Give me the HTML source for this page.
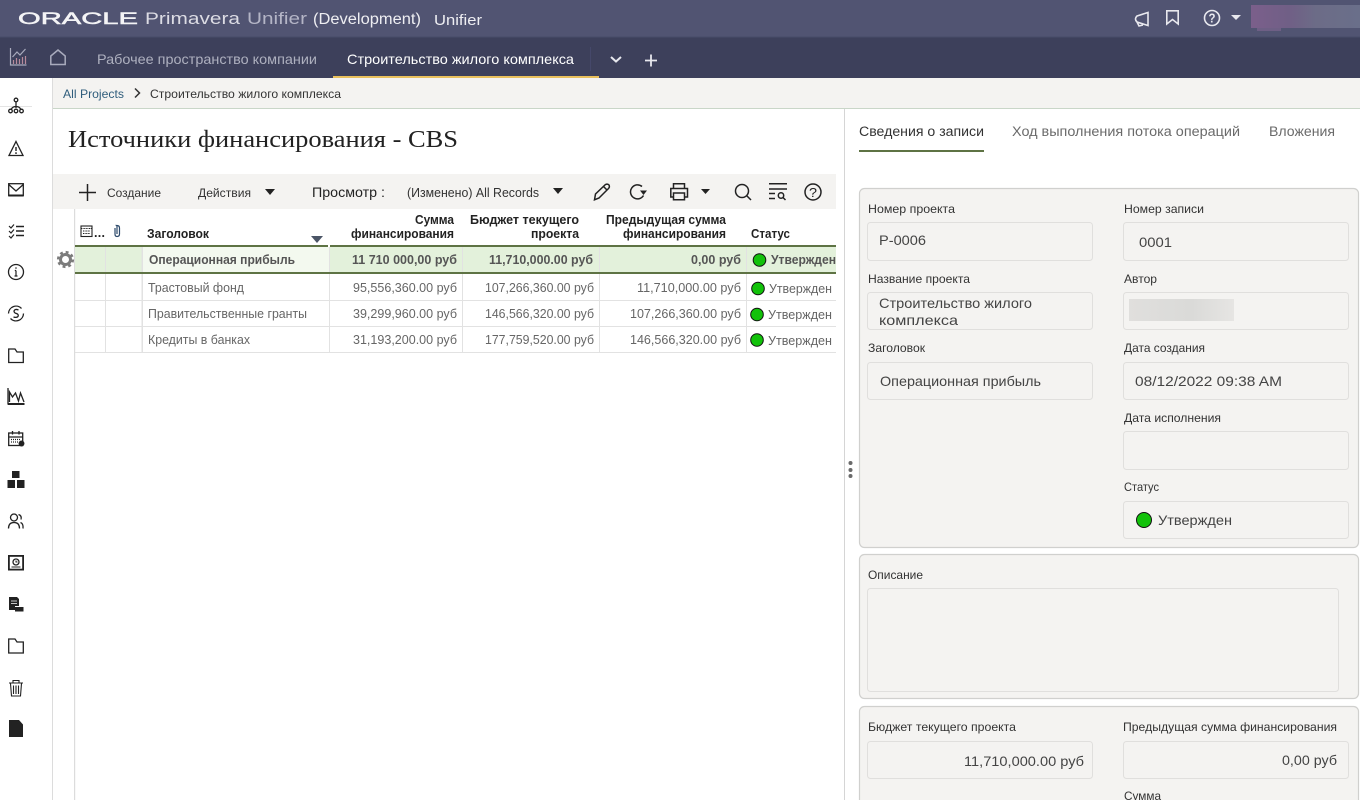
<!DOCTYPE html>
<html lang="ru"><head><meta charset="utf-8"><title>Unifier</title>
<style>
html,body{margin:0;padding:0;background:#fff;overflow:hidden;width:1360px;height:800px}
svg{position:absolute;left:0;top:0;display:block}
text{font-family:"Liberation Sans","Noto Sans CJK SC",sans-serif;font-size:13px;fill:#444;white-space:pre}
.h{font-weight:bold;font-size:12.5px;fill:#222}
.b{font-weight:bold;font-size:12.5px;fill:#555}
.c{font-size:12.5px;fill:#666}
.l{font-size:12px;fill:#333}
.v{font-size:14px;fill:#444}
.f{fill:#f4f3f1;stroke:#e0dfdd;stroke-width:1}
.p{fill:#f4f3f1;stroke:#d0d0ce;stroke-width:1.2}
.i{fill:none;stroke:#222;stroke-width:1.3}
.k{fill:#222;stroke:none}
.t{fill:none;stroke:#222;stroke-width:1.5}
.w{fill:none;stroke:#e8e8ee;stroke-width:1.6}
</style></head><body>
<svg width="1360" height="800" viewBox="0 0 1360 800" xmlns="http://www.w3.org/2000/svg">
<!-- top bars -->
<rect width="1360" height="37" fill="#515472"/>
<rect y="37" width="1360" height="41" fill="#3d405b"/>
<rect y="36.500" width="1360" height="1" fill="#484b68"/>
<text x="18" y="24" textLength="120" lengthAdjust="spacingAndGlyphs" style="font-size:17px;fill:#f4f4f6;stroke:#f4f4f6;stroke-width:.5">ORACLE</text>
<text x="145" y="24" textLength="95" lengthAdjust="spacingAndGlyphs" style="font-size:17px;fill:#dcdce4">Primavera</text>
<text x="247" y="24" textLength="60" lengthAdjust="spacingAndGlyphs" style="font-size:17px;fill:#b4b5c6">Unifier</text>
<text x="313" y="24" textLength="108" lengthAdjust="spacingAndGlyphs" style="font-size:15.500px;fill:#eeeef2">(Development)</text>
<text x="434" y="25" textLength="48" lengthAdjust="spacingAndGlyphs" style="font-size:15px;fill:#eeeef2">Unifier</text>
<!-- top right -->
<path class="w" d="M1137 16 L1148 12.500 V25.500 L1137 22 Q1134 19 1137 16 Z M1137 22 L1139 26 L1143 25"/>
<path class="w" d="M1166.800 10.800 H1178.200 V24 L1172.500 19.500 L1166.800 24 Z"/>
<circle class="w" cx="1212" cy="18" r="7.500"/>
<text x="1208.500" y="22.500" textLength="7" lengthAdjust="spacingAndGlyphs" style="font-size:12.500px;font-weight:bold;fill:#e8e8ee">?</text>
<path d="M1231 15 H1241 L1236 20 Z" fill="#e8e8ee"/>
<defs><linearGradient id="u"><stop offset="0" stop-color="#7b5f8b"/><stop offset=".35" stop-color="#705f86"/><stop offset=".6" stop-color="#6c6c87"/><stop offset="1" stop-color="#6a6f8a"/></linearGradient>
<linearGradient id="a"><stop offset="0" stop-color="#e0dfdd"/><stop offset=".6" stop-color="#dadad8"/><stop offset="1" stop-color="#e6e5e3"/></linearGradient></defs>
<rect x="1251" y="5" width="109" height="23" fill="url(#u)"/>
<rect x="1257" y="28" width="24" height="3" fill="#6e5f85"/>
<!-- nav -->
<g fill="none" stroke="#a9abbd" stroke-width="1.2">
<path d="M10.500 48 V65 H26.500 M12.500 57 L17 52 L20 55 L25.500 49"/>
<path d="M13.500 64 V60 M16.500 64 V58 M19.500 64 V59 M22.500 64 V57 M25.500 64 V56" stroke="#b78a9c"/>
<path d="M50.800 64.500 V56 L58 50 L65.200 56 V64.500 Z" stroke-width="1.500"/>
</g>
<text x="97" y="64" textLength="220" lengthAdjust="spacingAndGlyphs" style="font-size:14px;fill:#aeb0bf">Рабочее пространство компании</text>
<text x="347" y="64" textLength="227" lengthAdjust="spacingAndGlyphs" style="font-size:14px;fill:#fff">Строительство жилого комплекса</text>
<rect x="590" y="47" width="1" height="24" fill="#45486a"/>
<rect x="333" y="76" width="266" height="2" fill="#e9c05c"/>
<path d="M611 57 L616 61.500 L621 57" fill="none" stroke="#e8e8ee" stroke-width="2"/>
<path d="M651 54.500 V66.500 M645 60.500 H657" stroke="#e8e8ee" stroke-width="1.800"/>
<!-- sidebar and breadcrumb -->
<rect x="52" y="78" width="1" height="722" fill="#dcdcdc"/>
<rect x="53" y="78" width="1307" height="30" fill="#f4f3f1"/>
<rect x="53" y="108" width="1307" height="1" fill="#c9d6c8"/>
<text x="63" y="98" textLength="61" lengthAdjust="spacingAndGlyphs" style="font-size:12px;fill:#2f5d7c">All Projects</text>
<path d="M135 88.500 L139.500 93 L135 97.500" fill="none" stroke="#333" stroke-width="1.500"/>
<text x="150" y="98" textLength="191" lengthAdjust="spacingAndGlyphs" style="font-size:12px;fill:#333">Строительство жилого комплекса</text>
<rect x="0" y="106" width="32" height="1" fill="#e4e4e4"/>
<!-- sidebar icons -->
<g class="i">
<circle cx="16" cy="100" r="1.800"/><path d="M16 102 V108 M11 110 Q12 106.500 16 106.500 Q20 106.500 21 110"/><circle cx="10.500" cy="111" r="1.800"/><circle cx="16" cy="111" r="1.800"/><circle cx="21.500" cy="111" r="1.800"/>
<path d="M16 141.500 L23 155.500 H9 Z"/><path d="M16 147 V151 M16 152.300 V154" stroke-width="1.400"/>
<rect x="8.700" y="183.700" width="14.600" height="12"/><path d="M8.700 184.500 L16 191 L23.300 184.500"/><path d="M8.700 195.500 H23.300" stroke-width="2"/>
<path d="M9 226 L11 228 L14 224.500 M9 231 L11 233 L14 229.500 M9 236 L11 238 L14 234.500" stroke-width="1.200"/><path d="M16 226.500 H24 M16 231 H24 M16 235.500 H24" stroke-width="1.400"/>
<circle cx="16" cy="272" r="7.500"/><path d="M16 270.500 V276 M14.500 276 H17.500 M14.800 270.500 H16" stroke-width="1.200"/><circle cx="16" cy="268" r=".8" fill="#222" stroke="none"/>
<path d="M8.500 313.500 A7.500 7.500 0 0 1 21.500 308.500 M23.500 313.500 A7.500 7.500 0 0 1 10.500 318.500"/><path d="M18.500 310 Q15 308.500 14 311 Q14 313 16.500 313.500 Q19 314.500 18 316.500 Q16.500 318 13.500 317" stroke-width="1.300"/>
<path d="M8.700 349 H15 L17 352 H23.300 V362.500 H8.700 Z"/>
<path d="M8 388 V404 H24.500 M9.500 402 V392 L12.500 397 L15.500 393 L18.500 401 L20.500 393 L24 402" stroke-width="1.300"/><path d="M8 404 H24.500" stroke-width="2"/>
<rect x="8.700" y="433" width="14" height="12.500"/><path d="M8.700 437 H22.700 M12.500 431 V434.500 M19 431 V434.500"/><path d="M11 439.500 H20.500 M11 442 H18.500" stroke-dasharray="1 1"/>
<circle cx="21.500" cy="443.500" r="2.300" fill="#222"/>
<circle cx="14" cy="517.500" r="3.500"/><path d="M8.500 528.500 Q8.500 522.500 14 522.500 Q19.500 522.500 19.500 528.500 M18.500 514.500 Q22 515.500 21 519.500 M20.500 522.500 Q23.500 523.500 23 528.500"/>
<rect x="8.900" y="555.900" width="14.200" height="13.700" stroke-width="1.800"/><circle cx="16" cy="562" r="3"/><path d="M16 560.500 V562 H17.500 M11.500 567 H20.500" stroke-width="1"/>
<path d="M8.700 639 H15 L17 642 H23.300 V653 H8.700 Z"/>
<path d="M10.500 683.500 L11.500 696 H20.500 L21.500 683.500 M9 683 H23 M13 682.500 V680.500 H19 V682.500 M13.500 685.500 V694 M16 685.500 V694 M18.500 685.500 V694" stroke-width="1.100"/>
</g>
<path class="k" d="M12 471 H19.500 V478 H12 Z M7.500 480 H15 V488 H7.500 Z M17 480 H24.500 V488 H17 Z"/>
<path class="k" d="M9 597 H17 L19 599 V606 H15 V610 H9 Z M15 607 H23.500 V611.500 H15 Z"/>
<path d="M11 601 H17 M11 603.500 H17" stroke="#fff" stroke-width=".8"/>
<path class="k" d="M9 720 H19 L23 724.500 V737 H9 Z"/>
<!-- left title -->
<text x="68" y="147" textLength="390" lengthAdjust="spacingAndGlyphs" style="font-family:'Liberation Serif','Noto Serif CJK SC',serif;font-size:24px;fill:#222">Источники финансирования - CBS</text>
<!-- toolbar -->
<rect x="53" y="174" width="783" height="35" fill="#f4f3f1"/>
<path d="M87.500 184 V201 M79 192.500 H96" stroke="#222" stroke-width="1.500"/>
<text x="107" y="197" textLength="54" lengthAdjust="spacingAndGlyphs" style="font-size:12px;fill:#333">Создание</text>
<text x="198" y="197" textLength="53" lengthAdjust="spacingAndGlyphs" style="font-size:12px;fill:#333">Действия</text>
<path class="k" d="M265 189 H275 L270 195 Z"/>
<text x="312" y="197" textLength="73" lengthAdjust="spacingAndGlyphs" style="font-size:14px;fill:#222">Просмотр :</text>
<text x="407" y="197" textLength="132" lengthAdjust="spacingAndGlyphs" style="font-size:12.500px;fill:#333">(Изменено) All Records</text>
<path class="k" d="M553 188 H563 L558 194 Z"/>
<path class="t" d="M594.500 199.800 L595.500 194 L605.500 184.500 Q607.500 183.500 609 185 Q610 186.800 608.500 188.500 L599 198 Z M603.500 186.500 L607 190"/>
<path class="t" d="M642 186.500 A7 7 0 1 0 643.500 195.500"/><path class="k" d="M640 190.500 H647 L643.500 195 Z"/>
<path class="t" d="M673.500 188.500 V183.800 H684.500 V188.500 M673.500 197 H670.800 V188.500 H687.500 V197 H684.500 M673.500 193 H684.500 V199.800 H673.500 Z" stroke-width="1.600"/>
<path class="k" d="M701 189 H710 L705.500 194 Z"/>
<circle class="t" cx="742" cy="191" r="6.500"/><path class="t" d="M746.500 195.500 L751 200"/>
<path class="t" d="M769 183.800 H787 M769 189 H787 M769 193.500 H775 M769 198.500 H775"/><circle class="t" cx="781" cy="195.500" r="2.700"/><path class="t" d="M783 197.500 L785.500 200"/>
<circle class="t" cx="813" cy="192" r="8"/>
<text x="809" y="197" textLength="8" lengthAdjust="spacingAndGlyphs" style="font-size:13px;fill:#222">?</text>
<!-- table -->
<rect x="74" y="209" width="1.200" height="591" fill="#dcdcdc"/>
<rect x="81" y="226" width="11" height="10.500" fill="none" stroke="#222" stroke-width="1.100"/><path d="M81 228.500 H92 M83 231 H90 M83 233.500 H90" stroke="#222" stroke-width="1" stroke-dasharray="1 .6"/>
<text x="94" y="237" textLength="11" lengthAdjust="spacing" class="h">...</text>
<path d="M115 228 V234 Q115 236.500 117 236.500 Q119.500 236.500 119.500 234 V228 Q119.500 225.500 117 225.500 Q116.800 225.500 116.500 225.500 Q117 226 117 226 V234" fill="none" stroke="#2d4a6b" stroke-width="1.200"/>
<text class="h" x="147" y="238" textLength="62" lengthAdjust="spacingAndGlyphs">Заголовок</text>
<path d="M311 236 H323 L317 243 Z" fill="#4b5566"/>
<text class="h" x="415" y="224" textLength="39" lengthAdjust="spacingAndGlyphs">Сумма</text>
<text class="h" x="351" y="238" textLength="103" lengthAdjust="spacingAndGlyphs">финансирования</text>
<text class="h" x="470" y="224" textLength="109" lengthAdjust="spacingAndGlyphs">Бюджет текущего</text>
<text class="h" x="531" y="238" textLength="48" lengthAdjust="spacingAndGlyphs">проекта</text>
<text class="h" x="606" y="224" textLength="120" lengthAdjust="spacingAndGlyphs">Предыдущая сумма</text>
<text class="h" x="623" y="238" textLength="103" lengthAdjust="spacingAndGlyphs">финансирования</text>
<text class="h" x="751" y="238" textLength="39" lengthAdjust="spacingAndGlyphs">Статус</text>
<rect x="75" y="247" width="761" height="25" fill="#e3f1db"/>
<rect x="143" y="247" width="186" height="25" fill="#f3f9ef"/>
<rect x="75" y="245" width="761" height="2" fill="#5e7344"/>
<rect x="328" y="245" width="2" height="2" fill="#fff"/>
<g fill="#e2e2e2">
<rect x="75" y="300" width="761" height="1"/><rect x="75" y="326" width="761" height="1"/><rect x="75" y="352" width="761" height="1"/>
<rect x="105" y="247" width="1" height="106"/><rect x="141.500" y="247" width="1.500" height="106"/><rect x="329" y="247" width="1" height="106"/><rect x="462" y="247" width="1" height="106"/><rect x="599" y="247" width="1" height="106"/><rect x="746" y="247" width="1" height="106"/>
</g>
<rect x="75" y="272" width="761" height="2" fill="#5e7344"/>
<!-- gear -->
<circle cx="65.500" cy="259.500" r="5" fill="none" stroke="#7c7c7c" stroke-width="3"/>
<circle cx="65.500" cy="259.500" r="7.400" fill="none" stroke="#7c7c7c" stroke-width="2.400" stroke-dasharray="2.900 2.900"/>
<!-- row texts -->
<text class="b" x="149" y="264" textLength="146" lengthAdjust="spacingAndGlyphs">Операционная прибыль</text>
<text class="b" x="352" y="264" textLength="105" lengthAdjust="spacingAndGlyphs">11 710 000,00 руб</text>
<text class="b" x="489" y="264" textLength="104" lengthAdjust="spacingAndGlyphs">11,710,000.00 руб</text>
<text class="b" x="691" y="264" textLength="50" lengthAdjust="spacingAndGlyphs">0,00 руб</text>
<circle cx="759.500" cy="260" r="6.300" fill="#12c20a" stroke="#111" stroke-width="1"/>
<text class="b" x="771" y="264" textLength="65" lengthAdjust="spacingAndGlyphs">Утвержден</text>
<text class="c" x="148" y="292" textLength="96" lengthAdjust="spacingAndGlyphs">Трастовый фонд</text>
<text class="c" x="353" y="292" textLength="104" lengthAdjust="spacingAndGlyphs">95,556,360.00 руб</text>
<text class="c" x="485" y="292" textLength="109" lengthAdjust="spacingAndGlyphs">107,266,360.00 руб</text>
<text class="c" x="637" y="292" textLength="104" lengthAdjust="spacingAndGlyphs">11,710,000.00 руб</text>
<circle cx="758" cy="288.500" r="6.300" fill="#12c20a" stroke="#111" stroke-width="1"/>
<text class="c" x="769" y="293" textLength="63" lengthAdjust="spacingAndGlyphs">Утвержден</text>
<text class="c" x="148" y="318" textLength="159" lengthAdjust="spacingAndGlyphs">Правительственные гранты</text>
<text class="c" x="353" y="318" textLength="104" lengthAdjust="spacingAndGlyphs">39,299,960.00 руб</text>
<text class="c" x="485" y="318" textLength="109" lengthAdjust="spacingAndGlyphs">146,566,320.00 руб</text>
<text class="c" x="630" y="318" textLength="111" lengthAdjust="spacingAndGlyphs">107,266,360.00 руб</text>
<circle cx="757" cy="314.500" r="6.300" fill="#12c20a" stroke="#111" stroke-width="1"/>
<text class="c" x="768" y="319" textLength="64" lengthAdjust="spacingAndGlyphs">Утвержден</text>
<text class="c" x="148" y="344" textLength="102" lengthAdjust="spacingAndGlyphs">Кредиты в банках</text>
<text class="c" x="353" y="344" textLength="104" lengthAdjust="spacingAndGlyphs">31,193,200.00 руб</text>
<text class="c" x="485" y="344" textLength="109" lengthAdjust="spacingAndGlyphs">177,759,520.00 руб</text>
<text class="c" x="630" y="344" textLength="111" lengthAdjust="spacingAndGlyphs">146,566,320.00 руб</text>
<circle cx="757" cy="340" r="6.300" fill="#12c20a" stroke="#111" stroke-width="1"/>
<text class="c" x="768" y="345" textLength="64" lengthAdjust="spacingAndGlyphs">Утвержден</text>
<!-- divider -->
<rect x="844" y="109" width="1" height="691" fill="#d5d5d5"/>
<circle cx="850.500" cy="463" r="2" fill="#6a6a6a"/><circle cx="850.500" cy="470" r="2" fill="#6a6a6a"/><circle cx="850.500" cy="476" r="2" fill="#6a6a6a"/>
<!-- right tabs -->
<text x="859" y="136" textLength="125" lengthAdjust="spacingAndGlyphs" style="font-size:13.500px;fill:#333">Сведения о записи</text>
<text x="1012" y="136" textLength="228" lengthAdjust="spacingAndGlyphs" style="font-size:13.500px;fill:#6a6a6a">Ход выполнения потока операций</text>
<text x="1269" y="136" textLength="66" lengthAdjust="spacingAndGlyphs" style="font-size:13.500px;fill:#6a6a6a">Вложения</text>
<rect x="859" y="150" width="125" height="2" fill="#5e7344"/>
<!-- panel 1 -->
<rect class="p" x="859.500" y="188.500" width="499" height="359" rx="5"/>
<rect class="f" x="867.500" y="222.500" width="225" height="38" rx="3"/>
<rect class="f" x="1123.500" y="222.500" width="225" height="38" rx="3"/>
<rect class="f" x="867.500" y="292.500" width="225" height="37" rx="3"/>
<rect class="f" x="1123.500" y="292.500" width="225" height="37" rx="3"/>
<rect class="f" x="867.500" y="362.500" width="225" height="37" rx="3"/>
<rect class="f" x="1123.500" y="362.500" width="225" height="37" rx="3"/>
<rect class="f" x="1123.500" y="431.500" width="225" height="38" rx="3"/>
<rect class="f" x="1123.500" y="501.500" width="225" height="37" rx="3"/>
<text class="l" x="868" y="213" textLength="87" lengthAdjust="spacingAndGlyphs">Номер проекта</text>
<text class="l" x="1124" y="213" textLength="80" lengthAdjust="spacingAndGlyphs">Номер записи</text>
<text class="v" x="879" y="245" textLength="47" lengthAdjust="spacingAndGlyphs">P-0006</text>
<text class="v" x="1139" y="247" textLength="33" lengthAdjust="spacingAndGlyphs">0001</text>
<text class="l" x="868" y="283" textLength="102" lengthAdjust="spacingAndGlyphs">Название проекта</text>
<text class="l" x="1124" y="283" textLength="33" lengthAdjust="spacingAndGlyphs">Автор</text>
<text class="v" x="879" y="308" textLength="153" lengthAdjust="spacingAndGlyphs">Строительство жилого</text>
<text class="v" x="879" y="325" textLength="79" lengthAdjust="spacingAndGlyphs">комплекса</text>
<rect x="1129" y="299" width="105" height="22" fill="url(#a)"/>
<text class="l" x="868" y="352" textLength="57" lengthAdjust="spacingAndGlyphs">Заголовок</text>
<text class="l" x="1124" y="352" textLength="81" lengthAdjust="spacingAndGlyphs">Дата создания</text>
<text class="v" x="880" y="386" textLength="161" lengthAdjust="spacingAndGlyphs">Операционная прибыль</text>
<text class="v" x="1135" y="386" textLength="147" lengthAdjust="spacingAndGlyphs">08/12/2022 09:38 AM</text>
<text class="l" x="1124" y="422" textLength="97" lengthAdjust="spacingAndGlyphs">Дата исполнения</text>
<text class="l" x="1124" y="491" textLength="35" lengthAdjust="spacingAndGlyphs">Статус</text>
<circle cx="1144" cy="520" r="7.500" fill="#12c20a" stroke="#111" stroke-width="1"/>
<text class="v" x="1158" y="525" textLength="74" lengthAdjust="spacingAndGlyphs">Утвержден</text>
<!-- panel 2 -->
<rect class="p" x="859.500" y="554.500" width="499" height="144" rx="5"/>
<text class="l" x="868" y="579" textLength="55" lengthAdjust="spacingAndGlyphs">Описание</text>
<rect class="f" x="867.500" y="588.500" width="471" height="103" rx="3"/>
<!-- panel 3 -->
<rect class="p" x="859.500" y="706.500" width="499" height="110" rx="5"/>
<text class="l" x="868" y="731" textLength="148" lengthAdjust="spacingAndGlyphs">Бюджет текущего проекта</text>
<text class="l" x="1123" y="731" textLength="214" lengthAdjust="spacingAndGlyphs">Предыдущая сумма финансирования</text>
<rect class="f" x="867.500" y="741.500" width="225" height="37" rx="3"/>
<rect class="f" x="1123.500" y="741.500" width="225" height="37" rx="3"/>
<text class="v" x="964" y="766" textLength="120" lengthAdjust="spacingAndGlyphs">11,710,000.00 руб</text>
<text class="v" x="1282" y="765" textLength="55" lengthAdjust="spacingAndGlyphs">0,00 руб</text>
<text class="l" x="1124" y="800" textLength="37" lengthAdjust="spacingAndGlyphs">Сумма</text>
</svg>
</body></html>
